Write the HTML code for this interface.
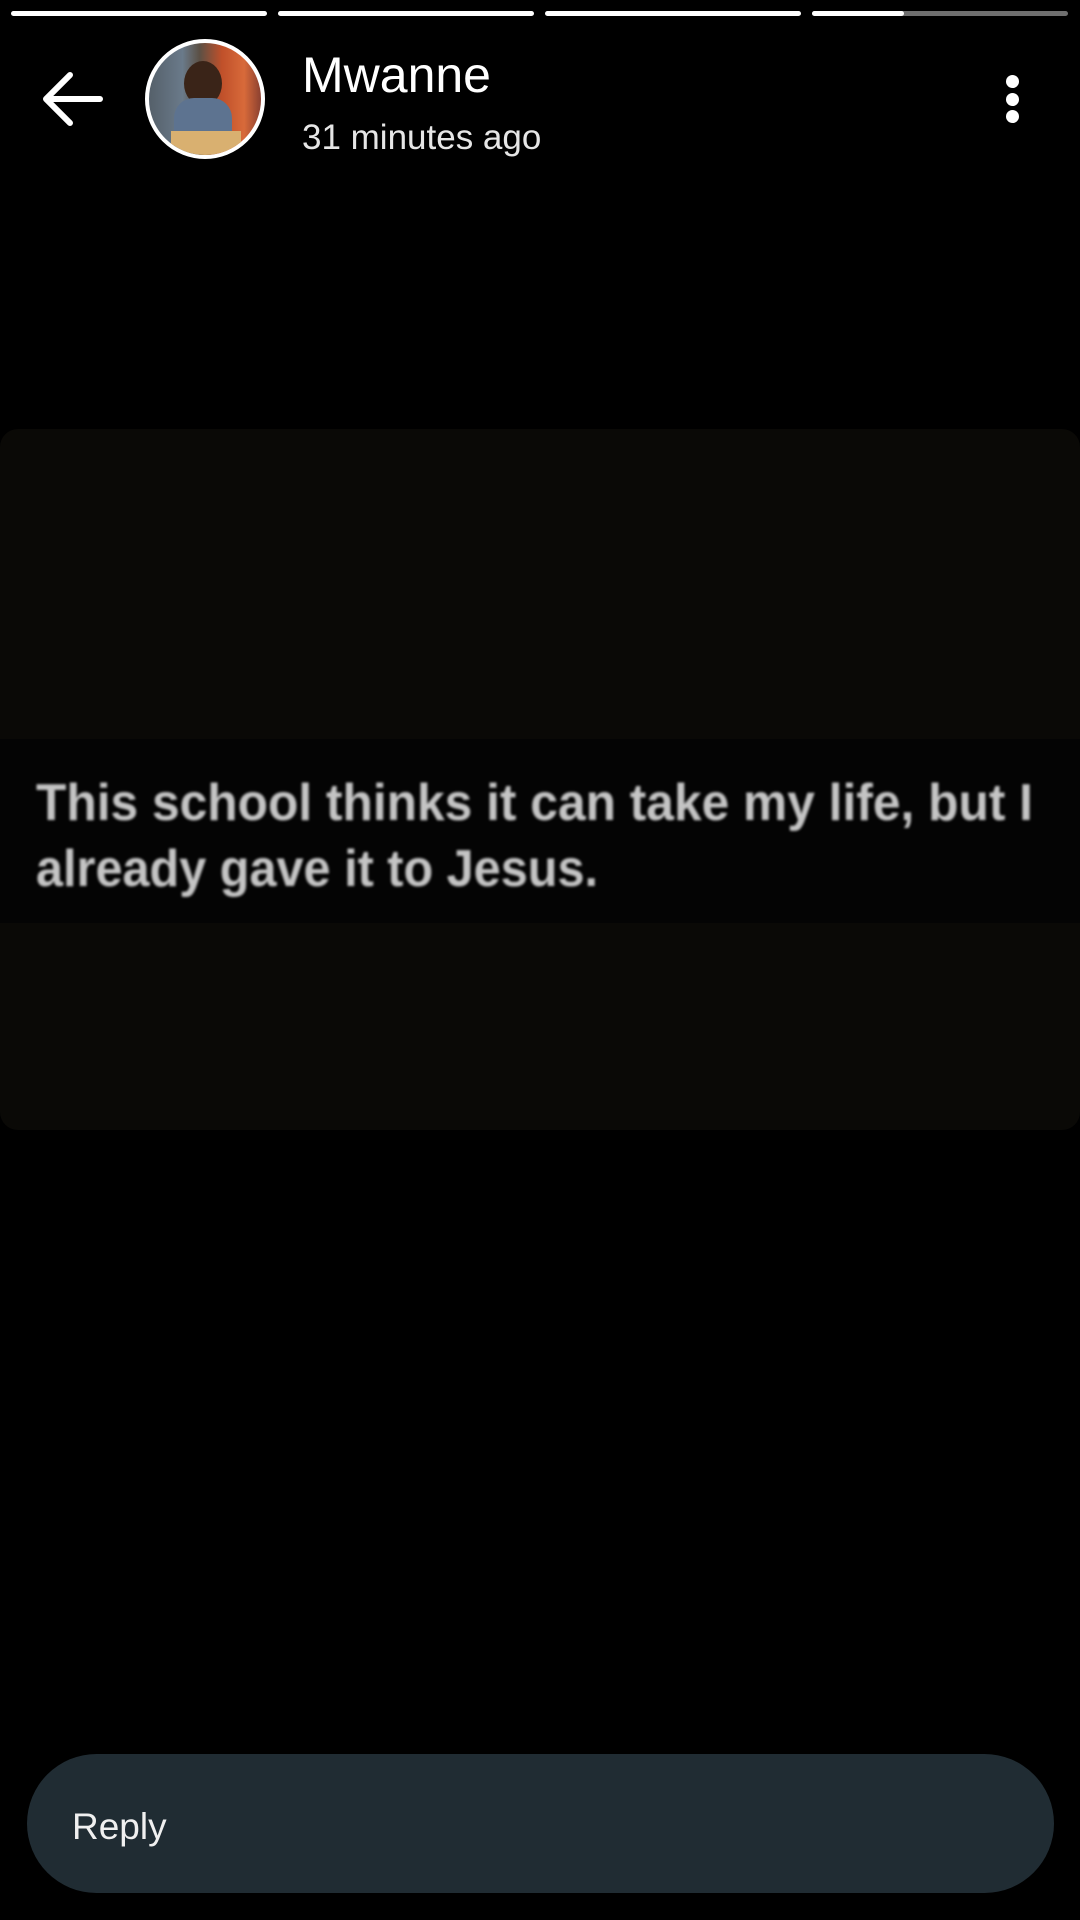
<!DOCTYPE html>
<html><head><meta charset="utf-8"><style>
html,body{margin:0;padding:0;background:#000;}
body{width:1080px;height:1920px;position:relative;overflow:hidden;font-family:"Liberation Sans",sans-serif;}
.bar{position:absolute;top:11px;height:5px;border-radius:3px;background:#fff;}
.card{position:absolute;left:0;top:429px;width:1080px;height:701px;background:#0a0906;border-radius:18px;}
.band{position:absolute;left:0;top:739px;width:1080px;height:184px;background:#040404;}
.reply{position:absolute;left:27px;top:1754px;width:1027px;height:139px;border-radius:70px;background:#202c33;}
</style></head><body>
<div class="bar" style="left:11px;width:256px"></div>
<div class="bar" style="left:278px;width:256px"></div>
<div class="bar" style="left:545px;width:256px"></div>
<div class="bar" style="left:812px;width:256px;background:#6f6f6f"></div>
<div class="bar" style="left:812px;width:92px"></div>

<svg style="position:absolute;left:40px;top:70px" width="64" height="60" viewBox="0 0 64 60">
<path d="M60 29H8M30 5L6 29L30 53" stroke="#fff" stroke-width="6" fill="none" stroke-linecap="round" stroke-linejoin="round"/>
</svg>

<div style="position:absolute;left:145px;top:39px;width:112px;height:112px;border:4px solid #fff;border-radius:50%;overflow:hidden;background:linear-gradient(90deg,#55606a 0%,#6a7a8a 30%,#5b5045 45%,#c0502a 65%,#d86a3a 85%,#8a4030 100%);">
<div style="position:absolute;left:35px;top:18px;width:38px;height:45px;border-radius:50%;background:#3a2418"></div>
<div style="position:absolute;left:25px;top:55px;width:58px;height:50px;border-radius:20px 20px 0 0;background:#5d7390"></div>
<div style="position:absolute;left:22px;top:88px;width:70px;height:30px;background:#d9b070"></div>
</div>

<div style="position:absolute;left:302px;top:46px;color:#fff;font-size:50px;">Mwanne</div>
<div style="position:absolute;left:302px;top:118px;color:#e6e6e6;font-size:35px;">31 minutes ago</div>

<div style="position:absolute;left:1006px;top:75px;width:13px;height:13px;border-radius:50%;background:#fff"></div>
<div style="position:absolute;left:1006px;top:93px;width:13px;height:13px;border-radius:50%;background:#fff"></div>
<div style="position:absolute;left:1006px;top:110px;width:13px;height:13px;border-radius:50%;background:#fff"></div>

<div class="card"></div>
<div class="band"></div>
<svg style="position:absolute;left:0;top:740px;filter:blur(1.2px)" width="1080" height="180">
<text x="36" y="80" font-family="Liberation Sans, sans-serif" font-weight="bold" font-size="52" fill="#c4c4c4" textLength="997" lengthAdjust="spacingAndGlyphs">This school thinks it can take my life, but I</text>
<text x="36" y="146" font-family="Liberation Sans, sans-serif" font-weight="bold" font-size="52" fill="#c4c4c4" textLength="562" lengthAdjust="spacingAndGlyphs">already gave it to Jesus.</text>
</svg>

<div class="reply"></div>
<div style="position:absolute;left:72px;top:1806px;color:#f0f0f0;font-size:37px;">Reply</div>
</body></html>
